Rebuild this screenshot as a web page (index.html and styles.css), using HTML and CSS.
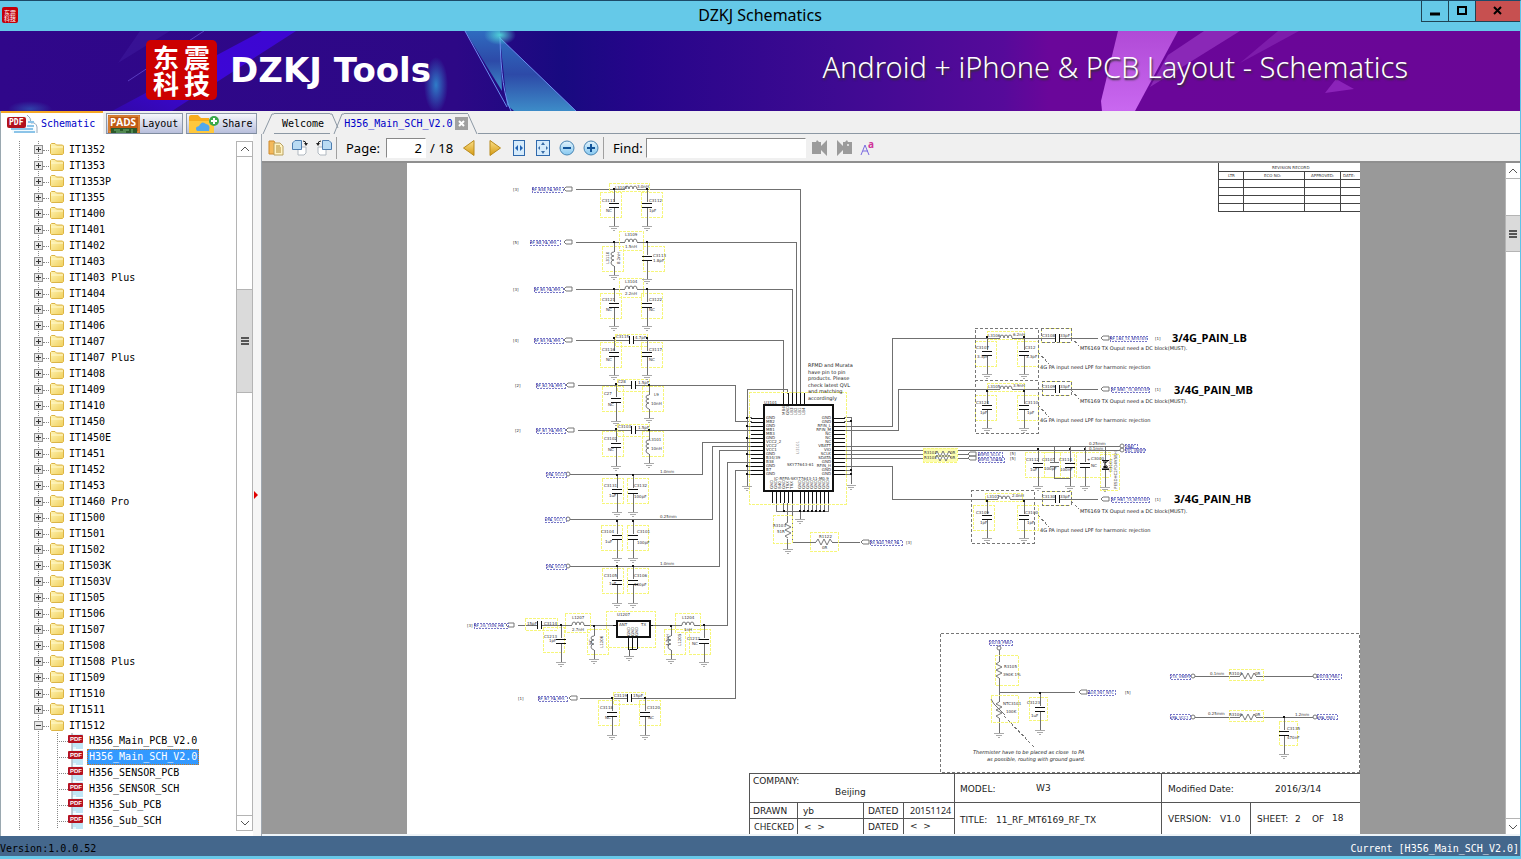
FILE: index.html
```html
<!DOCTYPE html>
<html lang="en">
<head>
    <meta charset="UTF-8">
    <meta name="viewport" content="width=device-width, initial-scale=1.0">
    <title>DZKJ Schematics</title>
    <link rel="stylesheet" href="styles.css">
</head>
<body>
    <!-- shared icons and schematic parts -->
    <svg class="defs" aria-hidden="true">
        <defs>
            <linearGradient id="gold" x1="0" y1="0" x2="1" y2="1">
                <stop offset="0" stop-color="#fff6b8"/><stop offset="1" stop-color="#f0cf5c"/>
            </linearGradient>
            <linearGradient id="amber" x1="0" y1="0" x2="0" y2="1">
                <stop offset="0" stop-color="#fbe08a"/><stop offset="1" stop-color="#d59a12"/>
            </linearGradient>
            <linearGradient id="ball" x1="0" y1="0" x2="0" y2="1">
                <stop offset="0" stop-color="#e2f3fc"/><stop offset="1" stop-color="#86c8f0"/>
            </linearGradient>
            <symbol id="folder" viewBox="0 0 14 12">
                <path d="M0.5 1.5 L1.5 0.5 H5 L6.5 2 H12.5 L13.5 3 V10.5 L12.5 11.5 H1.5 L0.5 10.5 Z" fill="url(#gold)" stroke="#dcb444"/>
                <path d="M1 4 H13" stroke="#fff9d0"/>
            </symbol>
            <symbol id="pdf" viewBox="0 0 16 16">
                <path d="M4 1 H12 L15 4 V16 H4 Z" fill="#e3f6fd"/>
                <path d="M5 11 H15 M5 13 H15 M8 15 H15 M12 2 H15" stroke="#9fd6ee"/>
                <path d="M4 0 V2 M4 9 V16" stroke="#8a98a8"/>
                <rect x="0" y="2" width="15" height="8" rx="1" fill="#b5121f"/>
                <text x="2" y="8" font-size="6" font-weight="bold" fill="#fff" font-family="Liberation Sans, sans-serif">PDF</text>
            </symbol>

            <g id="gnd"><path d="M-5 0 H5 M-3 2 H3 M-1 4 H1" stroke="#aaa"/></g>
            <g id="cap">
                <path d="M0 0 V13 M0 18 V37"/>
                <path d="M-5 14 H5 M-5 18 H5" class="plate"/>
                <circle r="1" class="dot"/>
                <use href="#gnd" y="37"/>
            </g>
            <g id="coil"><path d="M-6 0 H6" stroke="#fff" stroke-width="2"/><path d="M-6 0 q0 -3 2 -3 q2 0 2 3 q0 -3 2 -3 q2 0 2 3 q0 -3 2 -3 q2 0 2 3" class="curve"/></g>
            <g id="coil-v">
                <path d="M0 0 V10 M0 24 V33"/>
                <path d="M0 10 q-3 0 -3 2 q0 2 3 2 q-3 0 -3 2 q0 2 3 2 q-3 0 -3 3 q0 2 3 3" class="curve"/>
                <circle r="1" class="dot"/>
                <use href="#gnd" y="33"/>
            </g>
            <g id="cap-h"><path d="M-2 0 H2" stroke="#fff" stroke-width="3"/><path d="M-2 -4 V4 M2 -4 V4" class="plate"/></g>
            <g id="res"><path d="M-8 0 H8" stroke="#fff" stroke-width="2"/><path d="M-8 0 l2 -3 l3 6 l3 -6 l3 6 l3 -6 l2 3" class="curve"/></g>
            <g id="res-v"><path d="M0 -8 l-3 2 l6 3 l-6 3 l6 3 l-6 3 l3 2" class="curve"/></g>
            <g id="port"><path d="M0 0 l2 -2 h6 v4 h-6 Z" class="curve"/></g>
            <g id="box"><rect width="21" height="25" class="part"/></g>
        </defs>
    </svg>

    <header class="titlebar">
        <svg class="app-icon" viewBox="0 0 16 16" width="16" height="16">
            <rect width="16" height="16" rx="2" fill="#c4000a"/>
            <text x="2" y="8" font-size="6" fill="#fff">东震</text>
            <text x="2" y="14" font-size="6" fill="#fff">科技</text>
        </svg>
        <h1>DZKJ Schematics</h1>
        <div class="window-buttons">
            <button class="min" aria-label="Minimize"><svg width="10" height="10"><path d="M0 8 H10" stroke="#000" stroke-width="3"/></svg></button>
            <button class="max" aria-label="Maximize"><svg width="10" height="10"><path d="M1 1 H9 V8 H1 Z" fill="none" stroke="#000" stroke-width="2"/></svg></button>
            <button class="close" aria-label="Close"><svg width="10" height="10"><path d="M1 1 L8 8 M8 1 L1 8" stroke="#000" stroke-width="2"/></svg></button>
        </div>
    </header>

    <div class="banner">
        <svg class="banner-art" viewBox="0 0 1520 80" preserveAspectRatio="none">
            <defs>
                <linearGradient id="night">
                    <stop offset="0" stop-color="#30078a"/><stop offset="0.3" stop-color="#2d0886"/>
                    <stop offset="0.37" stop-color="#180a80"/><stop offset="0.42" stop-color="#26058a"/>
                    <stop offset="0.55" stop-color="#3e0a92"/><stop offset="0.66" stop-color="#560a9a"/>
                    <stop offset="0.69" stop-color="#6a069a"/><stop offset="1" stop-color="#6a0696"/>
                </linearGradient>
                <linearGradient id="ray" x1="1" y1="0" x2="0" y2="1">
                    <stop offset="0" stop-color="#3d06d0"/><stop offset="0.6" stop-color="#3c06d8"/><stop offset="1" stop-color="#3208a8"/>
                </linearGradient>
                <linearGradient id="glass" x1="0" y1="0" x2="0" y2="1">
                    <stop offset="0" stop-color="#2f6cc0"/><stop offset="0.5" stop-color="#2d4aa8"/><stop offset="1" stop-color="#3d8cc8"/>
                </linearGradient>
                <linearGradient id="pink" x1="0" y1="0" x2="0" y2="1">
                    <stop offset="0" stop-color="#b04ad6"/><stop offset="1" stop-color="#c968f0"/>
                </linearGradient>
                <radialGradient id="glow"><stop offset="0" stop-color="#2f7cc8"/><stop offset="1" stop-color="#2f7cc8" stop-opacity="0"/></radialGradient>
                <radialGradient id="spark"><stop offset="0" stop-color="#4fd0d8"/><stop offset="1" stop-color="#4fd0d8" stop-opacity="0"/></radialGradient>
            </defs>
            <rect width="1520" height="80" fill="url(#night)"/>
            <path d="M262 0 H296 L172 80 H112 Z" fill="url(#ray)"/>
            <path d="M140 0 H170 L118 32 Z" fill="#3f1ca0" opacity="0.5"/>
            <path d="M204 0 L128 50" stroke="#5a3cc0"/>
            <ellipse cx="436" cy="54" rx="12" ry="28" fill="url(#glow)"/>
            <ellipse cx="30" cy="78" rx="22" ry="8" fill="url(#glow)" opacity="0.5"/>
            <path d="M465 0 H500 L502 60 Z" fill="url(#glass)"/>
            <path d="M500 7 L576 80 H514 L507 74 Z" fill="url(#glass)"/>
            <path d="M465 0 L507 76 M499 6 L576 80 M500 6 Q501 60 511 80" fill="none" stroke="#6b8ff0"/>
            <ellipse cx="500" cy="4" rx="16" ry="10" fill="url(#spark)"/>
            <path d="M1118 0 H1178 L1135 80 H1102 L1101 70 Z" fill="url(#pink)"/>
            <path d="M1204 0 H1240 L1150 56 L1168 24 Z" fill="#a040cc" opacity="0.6"/>
            <path d="M1278 0 H1299 L1240 32 Z" fill="#8a2cb8" opacity="0.6"/>
            <path d="M1336 48 L1354 58 L1325 62 Z" fill="#9a30c8" opacity="0.7"/>
        </svg>
        <div class="brand">
            <div class="logo"><span>东</span><span>震</span><span>科</span><span>技</span></div>
            <div class="brand-name">DZKJ Tools</div>
        </div>
        <div class="tagline">Android + iPhone &amp; PCB Layout - Schematics</div>
    </div>

    <main class="workspace">
        <aside class="sidebar">
            <nav class="side-tabs">
                <button class="side-tab active">
                    <svg width="32" height="18" viewBox="0 0 32 18">
                        <path d="M5 1 H22 L30 10 V18 H5 Z" fill="#f2fbff"/>
                        <path d="M20 0 Q24 2 24 8 Q29 7 30 12 V18" fill="#fff" stroke="#9ab"/>
                        <path d="M4 14 H26 M7 17 H28 M21 7 H27 M20 11 H27" stroke="#8cc4e8" stroke-width="2"/>
                        <rect y="2" width="19" height="11" rx="2" fill="#b3121c"/>
                        <text x="2" y="10" font-size="8" font-weight="bold" fill="#fff">PDF</text>
                    </svg>Schematic
                </button>
                <button class="side-tab">
                    <svg width="32" height="18" viewBox="0 0 32 18">
                        <rect width="32" height="18" fill="#c05a14"/>
                        <rect x="1" y="1" width="30" height="16" fill="none" stroke="#e8a050"/>
                        <rect x="3" y="13" width="26" height="5" fill="#2b5a2b"/>
                        <path d="M6 15 H12 M15 15 H21 M8 17 H18 M24 14 V18" stroke="#79b879"/>
                        <text x="2" y="11" font-size="10" font-weight="bold" fill="#fff" font-family="Open Sans, sans-serif">PADS</text>
                    </svg>Layout
                </button>
                <button class="side-tab">
                    <svg width="32" height="18" viewBox="0 0 32 18">
                        <path d="M1 2 Q1 0 3 0 H10 L13 3 H21 V18 H1 Z" fill="#f7ac1c"/>
                        <path d="M1 6 H26 V18 H1 Z" fill="#ffc83c"/>
                        <path d="M9 16 Q6 12 11 11 Q14 5 18 9 Q23 10 21 16 Z" fill="#52a8ee"/>
                        <circle cx="26" cy="6" r="5" fill="#3aa84a"/>
                        <path d="M23 6 H29 M26 3 V9" stroke="#fff" stroke-width="2"/>
                    </svg>Share
                </button>
            </nav>
            <div class="side-body">
                <div class="tree-pane">
                    <ul class="tree">
                        <li><button class="exp" aria-label="Expand"></button><svg class="folder"><use href="#folder"/></svg>IT1352</li>
                        <li><button class="exp" aria-label="Expand"></button><svg class="folder"><use href="#folder"/></svg>IT1353</li>
                        <li><button class="exp" aria-label="Expand"></button><svg class="folder"><use href="#folder"/></svg>IT1353P</li>
                        <li><button class="exp" aria-label="Expand"></button><svg class="folder"><use href="#folder"/></svg>IT1355</li>
                        <li><button class="exp" aria-label="Expand"></button><svg class="folder"><use href="#folder"/></svg>IT1400</li>
                        <li><button class="exp" aria-label="Expand"></button><svg class="folder"><use href="#folder"/></svg>IT1401</li>
                        <li><button class="exp" aria-label="Expand"></button><svg class="folder"><use href="#folder"/></svg>IT1402</li>
                        <li><button class="exp" aria-label="Expand"></button><svg class="folder"><use href="#folder"/></svg>IT1403</li>
                        <li><button class="exp" aria-label="Expand"></button><svg class="folder"><use href="#folder"/></svg>IT1403 Plus</li>
                        <li><button class="exp" aria-label="Expand"></button><svg class="folder"><use href="#folder"/></svg>IT1404</li>
                        <li><button class="exp" aria-label="Expand"></button><svg class="folder"><use href="#folder"/></svg>IT1405</li>
                        <li><button class="exp" aria-label="Expand"></button><svg class="folder"><use href="#folder"/></svg>IT1406</li>
                        <li><button class="exp" aria-label="Expand"></button><svg class="folder"><use href="#folder"/></svg>IT1407</li>
                        <li><button class="exp" aria-label="Expand"></button><svg class="folder"><use href="#folder"/></svg>IT1407 Plus</li>
                        <li><button class="exp" aria-label="Expand"></button><svg class="folder"><use href="#folder"/></svg>IT1408</li>
                        <li><button class="exp" aria-label="Expand"></button><svg class="folder"><use href="#folder"/></svg>IT1409</li>
                        <li><button class="exp" aria-label="Expand"></button><svg class="folder"><use href="#folder"/></svg>IT1410</li>
                        <li><button class="exp" aria-label="Expand"></button><svg class="folder"><use href="#folder"/></svg>IT1450</li>
                        <li><button class="exp" aria-label="Expand"></button><svg class="folder"><use href="#folder"/></svg>IT1450E</li>
                        <li><button class="exp" aria-label="Expand"></button><svg class="folder"><use href="#folder"/></svg>IT1451</li>
                        <li><button class="exp" aria-label="Expand"></button><svg class="folder"><use href="#folder"/></svg>IT1452</li>
                        <li><button class="exp" aria-label="Expand"></button><svg class="folder"><use href="#folder"/></svg>IT1453</li>
                        <li><button class="exp" aria-label="Expand"></button><svg class="folder"><use href="#folder"/></svg>IT1460 Pro</li>
                        <li><button class="exp" aria-label="Expand"></button><svg class="folder"><use href="#folder"/></svg>IT1500</li>
                        <li><button class="exp" aria-label="Expand"></button><svg class="folder"><use href="#folder"/></svg>IT1501</li>
                        <li><button class="exp" aria-label="Expand"></button><svg class="folder"><use href="#folder"/></svg>IT1502</li>
                        <li><button class="exp" aria-label="Expand"></button><svg class="folder"><use href="#folder"/></svg>IT1503K</li>
                        <li><button class="exp" aria-label="Expand"></button><svg class="folder"><use href="#folder"/></svg>IT1503V</li>
                        <li><button class="exp" aria-label="Expand"></button><svg class="folder"><use href="#folder"/></svg>IT1505</li>
                        <li><button class="exp" aria-label="Expand"></button><svg class="folder"><use href="#folder"/></svg>IT1506</li>
                        <li><button class="exp" aria-label="Expand"></button><svg class="folder"><use href="#folder"/></svg>IT1507</li>
                        <li><button class="exp" aria-label="Expand"></button><svg class="folder"><use href="#folder"/></svg>IT1508</li>
                        <li><button class="exp" aria-label="Expand"></button><svg class="folder"><use href="#folder"/></svg>IT1508 Plus</li>
                        <li><button class="exp" aria-label="Expand"></button><svg class="folder"><use href="#folder"/></svg>IT1509</li>
                        <li><button class="exp" aria-label="Expand"></button><svg class="folder"><use href="#folder"/></svg>IT1510</li>
                        <li><button class="exp" aria-label="Expand"></button><svg class="folder"><use href="#folder"/></svg>IT1511</li>
                        <li><button class="exp open" aria-label="Collapse"></button><svg class="folder"><use href="#folder"/></svg>IT1512</li>
                        <li class="file"><svg class="pdf"><use href="#pdf"/></svg><a href="#">H356_Main_PCB_V2.0</a></li>
                        <li class="file"><svg class="pdf"><use href="#pdf"/></svg><a href="#" class="selected">H356_Main_SCH_V2.0</a></li>
                        <li class="file"><svg class="pdf"><use href="#pdf"/></svg><a href="#">H356_SENSOR_PCB</a></li>
                        <li class="file"><svg class="pdf"><use href="#pdf"/></svg><a href="#">H356_SENSOR_SCH</a></li>
                        <li class="file"><svg class="pdf"><use href="#pdf"/></svg><a href="#">H356_Sub_PCB</a></li>
                        <li class="file"><svg class="pdf"><use href="#pdf"/></svg><a href="#">H356_Sub_SCH</a></li>
                        <li class="more"><svg class="folder"><use href="#folder"/></svg></li>
                    </ul>
                    <div class="scrollbar tree-scroll">
                        <button aria-label="Scroll up"><svg width="10" height="6"><path d="M1 5 L5 1 L9 5"/></svg></button>
                        <div class="track"><div class="before"></div><div class="thumb"><i></i><i></i><i></i></div><div class="after"></div></div>
                        <button aria-label="Scroll down"><svg width="10" height="6"><path d="M1 1 L5 5 L9 1"/></svg></button>
                    </div>
                </div>
                <div class="splitter"><svg width="4" height="8"><path d="M0 0 L4 4 L0 8 Z" fill="#e00000"/></svg></div>
            </div>
        </aside>

        <section class="document">
            <nav class="doc-tabs">
                <svg class="edge" width="12" height="21"><path d="M1 21 L10 1 H12"/></svg>
                <button class="doc-tab">Welcome</button>
                <svg class="edge" width="14" height="21"><path d="M0 1 H2 L8 15 M4 21 L12 1 H14"/></svg>
                <button class="doc-tab active">H356_Main_SCH_V2.0</button>
                <button class="doc-close" aria-label="Close tab"><svg width="13" height="13"><rect width="13" height="13" fill="#a0a0a0"/><path d="M4 4 L9 9 M9 4 L4 9" stroke="#fff" stroke-width="2"/></svg></button>
                <svg class="edge" width="10" height="21"><path d="M0 1 L9 21"/></svg>
                <div class="doc-line"></div>
            </nav>
            <div class="toolbar">
                <button aria-label="Contents"><svg width="16" height="16">
                    <path d="M1 1 H6 L7 3 V14 H1 Z" fill="#f3b95c" stroke="#cf8a2c"/>
                    <path d="M6 3 H12 L15 6 V15 H6 Z" fill="#fff3c4" stroke="#b8a060"/>
                    <path d="M8 6 H12 M8 8 H13 M8 10 H13 M8 12 H13" stroke="#b08a30"/>
                </svg></button>
                <button aria-label="Rotate right"><svg width="16" height="16">
                    <path d="M6 7 H14 V13 L12 15 H6 Z" fill="#fff" stroke="#b0b8c0"/>
                    <path d="M0.5 3 L3 0.5 H9.5 V9.5 H0.5 Z" fill="#b9dbf3" stroke="#4f7eb0"/>
                    <path d="M11 1 Q14 1 14 4" fill="none" stroke="#222"/><path d="M12 3 H16 L14 6 Z" fill="#222"/>
                </svg></button>
                <button aria-label="Rotate left"><svg width="16" height="16">
                    <path d="M2 7 H10 V15 H4 L2 13 Z" fill="#fff" stroke="#b0b8c0"/>
                    <path d="M6.5 0.5 H13 L15.5 3 V9.5 H6.5 Z" fill="#b9dbf3" stroke="#4f7eb0"/>
                    <path d="M5 1 Q2 1 2 4" fill="none" stroke="#222"/><path d="M0 3 H4 L2 6 Z" fill="#222"/>
                </svg></button>
                <span class="sep"></span>
                <label for="page">Page:</label>
                <input id="page" class="page-input" type="text" value="2">
                <span class="page-total">/ 18</span>
                <button aria-label="Previous page"><svg width="16" height="16"><path d="M13 0.5 V15.5 L2.5 8 Z" fill="url(#amber)" stroke="#b98a1c"/></svg></button>
                <button class="next" aria-label="Next page"><svg width="16" height="16"><path d="M3 0.5 V15.5 L13.5 8 Z" fill="url(#amber)" stroke="#b98a1c"/></svg></button>
                <button aria-label="Fit width"><svg width="16" height="16">
                    <rect x="2.5" y="0.5" width="11" height="15" fill="#d6ebfb" stroke="#2f69ac"/><path d="M7 5 V11 L4 8 Z M9 5 V11 L12 8 Z" fill="#1f62b4"/>
                </svg></button>
                <button aria-label="Fit page"><svg width="16" height="16">
                    <rect x="1.5" y="0.5" width="13" height="15" fill="#d6ebfb" stroke="#2f69ac"/><path d="M8 2 L10 5 H6 Z M8 14 L10 11 H6 Z M3 8 L5 6 V10 Z M13 8 L11 6 V10 Z" fill="#3b6ea8"/>
                </svg></button>
                <button aria-label="Zoom out"><svg width="16" height="16"><circle cx="8" cy="8" r="7" fill="url(#ball)" stroke="#4a86b4"/><path d="M4 8 H12" stroke="#12559a" stroke-width="2"/></svg></button>
                <button aria-label="Zoom in"><svg width="16" height="16"><circle cx="8" cy="8" r="7" fill="url(#ball)" stroke="#4a86b4"/><path d="M4 8 H12 M8 4 V12" stroke="#12559a" stroke-width="2"/></svg></button>
                <span class="sep"></span>
                <label for="find">Find:</label>
                <input id="find" class="find-input" type="text">
                <button aria-label="Find previous"><svg width="16" height="16"><path d="M0 2 H4 L5 0 L7 2 H9 V6 L15 0 V16 L9 10 V14 H0 Z" fill="#9b9b9b"/></svg></button>
                <button aria-label="Find next"><svg width="16" height="16"><path d="M16 2 H12 L11 0 L9 2 H7 V6 L1 0 V16 L7 10 V14 H16 Z" fill="#9b9b9b"/><circle cx="12" cy="5" r="1" fill="#eee"/></svg></button>
                <button aria-label="Match case"><svg class="case" width="16" height="16"><path d="M1 15 L5 5 L9 15 M3 11 H8" fill="none" stroke="#7a6ae0"/><text x="8" y="8" font-size="10" font-weight="bold" fill="#d0359a">a</text></svg></button>
            </div>

            <div class="viewer">
                <div class="canvas">
                    <svg class="sheet" viewBox="407 163 953 671" preserveAspectRatio="xMidYMin meet">
                        <!-- revision record -->
                        <path d="M1218 163 V211 H1360 M1218 171 H1360 M1218 179 H1360 M1218 187 H1360 M1218 195 H1360 M1218 203 H1360 M1243 171 V211 M1304 171 V211 M1340 171 V211" stroke="#444"/>
                        <g class="tiny">
                            <text x="1272" y="169">REVISION RECORD</text><text x="1228" y="177">LTR</text><text x="1264" y="177">ECO NO:</text>
                            <text x="1311" y="177">APPROVED:</text><text x="1343" y="177">DATE:</text>
                        </g>

                        <!-- wires -->
                        <g class="wire">
                            <path d="M576 189 H800 V394 M576 242 H796 V394 M576 289 H792 V394 M576 340 H783 V394"/>
                            <path d="M578 385 H735 V421 H752 M578 430 H752"/>
                            <path d="M570 474 H702 V442 H752 M570 519 H712 V446 H752 M570 566 H719 V450 H752"/>
                            <path d="M518 625 H616 M650 625 H727 V462 H752 M580 698 H735 V470 H752"/>
                            <path d="M787 394 V389 H747 V486 M747 417 H752 M747 426 H752 M747 438 H752 M747 454 H752 M747 466 H752 M747 474 H752"/>
                            <path d="M844 417 H851 V484 M844 421 H851 M844 470 H851 M844 474 H851"/>
                            <path d="M844 426 H892 V338 H1098 M844 430 H898 V389 H1098 M844 466 H892 V499 H1098"/>
                            <path d="M844 446 H1120 M844 450 H1120 M844 454 H968 M844 458 H968"/>
                            <path d="M776 503 V511 H828 V503 M783 503 V511 M800 503 V519 M804 503 V511 M808 503 V511 M812 503 V511 M816 503 V511 M820 503 V511 M824 503 V511"/>
                            <path d="M787 503 V522 M787 539 V549 M792 503 V542 H860"/>
                            <path d="M999 650 V662 M999 678 V702 M999 718 V733 M999 692 H1075 M1195 676 H1313 M1195 717 H1313"/>
                        </g>
                        <g><use href="#gnd" x="747" y="486"/><use href="#gnd" x="851" y="485"/><use href="#gnd" x="800" y="519"/><use href="#gnd" x="788" y="549"/><use href="#gnd" x="999" y="733"/></g>

                        <!-- part outlines -->
                        <g>
                            <rect x="609" y="183" width="40" height="8" class="part"/><use href="#box" x="600" y="192"/><use href="#box" x="641" y="192"/>
                            <rect x="619" y="231" width="24" height="19" class="part"/><use href="#box" x="602" y="246"/><use href="#box" x="643" y="246"/>
                            <rect x="619" y="278" width="24" height="19" class="part"/><use href="#box" x="600" y="293"/><use href="#box" x="641" y="293"/>
                            <rect x="615" y="334" width="32" height="12" class="part"/><use href="#box" x="600" y="342"/><use href="#box" x="641" y="342"/>
                            <rect x="617" y="379" width="32" height="12" class="part"/><use href="#box" x="602" y="386"/><use href="#box" x="642" y="386"/>
                            <rect x="617" y="424" width="32" height="12" class="part"/><use href="#box" x="602" y="431"/><use href="#box" x="642" y="431"/>
                            <use href="#box" x="602" y="478"/><use href="#box" x="627" y="478"/><use href="#box" x="601" y="525"/><use href="#box" x="627" y="525"/><use href="#box" x="602" y="568"/><use href="#box" x="627" y="568"/>
                            <rect x="525" y="618" width="32" height="12" class="part"/><rect x="565" y="613" width="25" height="19" class="part"/><rect x="675" y="613" width="25" height="19" class="part"/><rect x="606" y="611" width="49" height="36" class="part"/>
                            <use href="#box" x="543" y="627"/><use href="#box" x="587" y="629"/><use href="#box" x="664" y="629"/><use href="#box" x="689" y="629"/>
                            <rect x="613" y="692" width="32" height="12" class="part"/><use href="#box" x="598" y="700"/><use href="#box" x="639" y="700"/>
                            <rect x="749" y="392" width="97" height="112" class="part"/><rect x="773" y="515" width="19" height="28" class="part"/><rect x="810" y="532" width="28" height="19" class="part"/>
                            <rect x="923" y="448" width="34" height="14" class="part filled"/>
                            <rect x="987" y="331" width="37" height="8" class="part"/><use href="#box" x="975" y="341"/><use href="#box" x="1017" y="341"/>
                            <rect x="987" y="383" width="37" height="8" class="part"/><use href="#box" x="975" y="395"/><use href="#box" x="1017" y="395"/>
                            <rect x="985" y="493" width="37" height="8" class="part"/><use href="#box" x="973" y="505"/><use href="#box" x="1017" y="505"/>
                            <rect x="1041" y="328" width="30" height="14" class="part"/><rect x="1042" y="381" width="29" height="14" class="part"/><rect x="1042" y="491" width="29" height="14" class="part"/>
                            <rect x="1025" y="452" width="35" height="25" class="part"/><rect x="1044" y="452" width="30" height="25" class="part"/><rect x="1076" y="452" width="34" height="25" class="part"/><rect x="1100" y="454" width="19" height="36" class="part"/>
                            <rect x="995" y="655" width="23" height="30" class="part"/><rect x="991" y="695" width="27" height="27" class="part"/><rect x="1029" y="697" width="18" height="23" class="part"/>
                            <rect x="1229" y="669" width="34" height="11" class="part"/><rect x="1229" y="710" width="34" height="11" class="part"/><rect x="1279" y="721" width="18" height="24" class="part"/>
                        </g>

                        <!-- capacitors, coils and resistors -->
                        <g class="wire">
                            <use href="#cap" x="614" y="189"/><use href="#cap" x="647" y="189"/><use href="#coil" x="631" y="189"/>
                            <use href="#coil-v" x="614" y="242"/><use href="#cap" x="647" y="242"/><use href="#coil" x="631" y="242"/>
                            <use href="#cap" x="614" y="289"/><use href="#cap" x="647" y="289"/><use href="#coil" x="631" y="289"/>
                            <use href="#cap" x="614" y="338"/><use href="#cap" x="647" y="338"/><use href="#cap-h" x="631" y="340"/>
                            <use href="#cap" x="616" y="384"/><use href="#coil-v" x="649" y="385"/><use href="#cap-h" x="633" y="385"/>
                            <use href="#cap" x="616" y="429"/><use href="#coil-v" x="649" y="430"/><use href="#cap-h" x="633" y="430"/>
                            <use href="#cap" x="617" y="475"/><use href="#cap" x="633" y="475"/>
                            <use href="#cap" x="617" y="521"/><use href="#cap" x="633" y="521"/>
                            <use href="#cap" x="617" y="566"/><use href="#cap" x="633" y="566"/>
                            <use href="#cap-h" x="539" y="625"/><use href="#cap" x="561" y="625"/><use href="#coil" x="578" y="625"/><use href="#coil-v" x="594" y="626"/>
                            <use href="#coil-v" x="671" y="626"/><use href="#coil" x="688" y="625"/><use href="#cap" x="704" y="625"/>
                            <use href="#cap" x="612" y="698"/><use href="#cap-h" x="629" y="698"/><use href="#cap" x="645" y="698"/>
                            <use href="#cap" x="987" y="337"/><use href="#coil" x="1006" y="338"/><use href="#cap" x="1024" y="337"/><use href="#cap-h" x="1057" y="338"/>
                            <use href="#cap" x="987" y="391"/><use href="#coil" x="1006" y="389"/><use href="#cap" x="1024" y="391"/><use href="#cap-h" x="1057" y="389"/>
                            <use href="#cap" x="987" y="501"/><use href="#coil" x="1004" y="499"/><use href="#cap" x="1024" y="501"/><use href="#cap-h" x="1057" y="499"/>
                            <use href="#cap" x="1038" y="449"/><path d="M1054 446 V462 M1054 466 V478 H1070 M1050 462 H1059 M1050 466 H1059"/><use href="#cap" x="1070" y="449"/><use href="#cap" x="1085" y="449"/>
                            <path d="M1105 446 V487 M1070 446 V450 M1085 446 V450"/><path d="M1103 461 H1108 L1105 464 L1108 468 H1103 L1105 464 Z" class="solid"/><path d="M1102 460 H1109 M1102 469 H1109" class="plate"/><use href="#gnd" x="1105" y="487"/>
                            <use href="#cap" x="1040" y="693"/><use href="#res-v" x="999" y="670"/><use href="#res-v" x="999" y="710"/><path d="M991 699 L994 704 L1005 715" class="curve"/>
                            <use href="#res" x="1248" y="676"/><use href="#res" x="1248" y="717"/><use href="#cap" x="1284" y="717"/>
                            <use href="#res-v" x="788" y="530"/><use href="#res" x="824" y="542"/><use href="#res" x="943" y="454"/><use href="#res" x="943" y="458"/>
                        </g>

                        <!-- ports -->
                        <g>
                            <use href="#port" x="564" y="189"/><use href="#port" x="564" y="242"/><use href="#port" x="564" y="289"/><use href="#port" x="564" y="340"/><use href="#port" x="566" y="385"/><use href="#port" x="566" y="430"/>
                            <use href="#port" x="506" y="625"/><use href="#port" x="569" y="698"/><use href="#port" x="861" y="542"/><use href="#port" x="968" y="454"/><use href="#port" x="968" y="458"/>
                            <use href="#port" x="1101" y="338"/><use href="#port" x="1101" y="389"/><use href="#port" x="1101" y="499"/><use href="#port" x="1079" y="692"/>
                            <circle cx="568" cy="474" r="2" class="curve"/><circle cx="568" cy="519" r="2" class="curve"/><circle cx="568" cy="566" r="2" class="curve"/>
                            <circle cx="1122" cy="446" r="2" class="curve"/><circle cx="1122" cy="450" r="2" class="curve"/><circle cx="999" cy="648" r="2" class="curve"/>
                            <circle cx="1193" cy="676" r="2" class="curve"/><circle cx="1193" cy="717" r="2" class="curve"/><circle cx="1315" cy="676" r="2" class="curve"/><circle cx="1315" cy="717" r="2" class="curve"/>
                        </g>
                        <g class="net-box">
                            <rect x="532" y="187" width="31" height="5"/><rect x="530" y="240" width="30" height="5"/><rect x="534" y="287" width="29" height="5"/><rect x="534" y="338" width="29" height="5"/><rect x="536" y="383" width="29" height="5"/><rect x="536" y="428" width="29" height="5"/>
                            <rect x="546" y="472" width="20" height="5"/><rect x="545" y="517" width="21" height="5"/><rect x="546" y="564" width="20" height="5"/><rect x="474" y="623" width="34" height="5"/><rect x="538" y="696" width="29" height="5"/>
                            <rect x="870" y="540" width="32" height="5"/><rect x="978" y="452" width="24" height="5"/><rect x="978" y="457" width="26" height="5"/><rect x="1110" y="336" width="37" height="5"/><rect x="1111" y="387" width="38" height="5"/><rect x="1111" y="497" width="38" height="5"/>
                            <rect x="1125" y="444" width="12" height="4"/><rect x="1125" y="448" width="20" height="4"/><rect x="989" y="640" width="23" height="5"/><rect x="1088" y="690" width="27" height="5"/>
                            <rect x="1170" y="674" width="20" height="5"/><rect x="1170" y="714" width="20" height="5"/><rect x="1317" y="674" width="24" height="5"/><rect x="1317" y="714" width="20" height="5"/>
                        </g>
                        <g class="net">
                            <text x="532" y="191">RF_B38_PA_RFX</text><text x="530" y="244">RF_B8_PA_RFX</text><text x="534" y="291">RF_B5_PA_RFX</text><text x="534" y="342">RF_B3_PA_RFX</text><text x="536" y="387">RF_B2_PA_RFX</text><text x="536" y="432">RF_B1_PA_RFX</text>
                            <text x="546" y="476">VPA_VCC2</text><text x="545" y="521">VPA_VCC1</text><text x="546" y="568">VPA_VCC2</text><text x="474" y="627">RF_2G_TXIN_HB</text><text x="538" y="700">RF_B7_PA_RFX</text>
                            <text x="870" y="544">RX_B40_TRX_PA</text><text x="978" y="456">MIPI0_SCLK</text><text x="978" y="461">MIPI0_SDATA</text>
                            <text x="1110" y="340">RF_LB3_TX_MT6169</text><text x="1111" y="391">RF_MB1_TX_MT6169</text><text x="1111" y="501">RF_HB1_TX_MT6169</text>
                            <text x="1125" y="448">VBAT</text><text x="1125" y="452">VIO_VMIPI</text><text x="989" y="644">VIO18_PMU</text><text x="1088" y="694">AUX_IN1_NTC</text>
                            <text x="1170" y="678">VTX_VMIPI</text><text x="1170" y="719">VPA_VCC1</text><text x="1317" y="678">VIO18_PMU</text><text x="1317" y="719">VPA_PMU</text>
                        </g>

                        <g class="tiny">
                            <text x="513" y="191">[3]</text><text x="513" y="244">[5]</text><text x="513" y="291">[3]</text><text x="513" y="342">[4]</text><text x="515" y="387">[2]</text><text x="515" y="432">[2]</text><text x="467" y="627">[3]</text><text x="518" y="700">[1]</text>
                            <text x="906" y="544">[3]</text><text x="1010" y="455">[5]</text><text x="1010" y="460">[5]</text><text x="1155" y="340">[1]</text><text x="1155" y="391">[1]</text><text x="1155" y="501">[1]</text><text x="1125" y="694">[5]</text>
                            <text x="615" y="189">L3103</text><text x="637" y="188">3.0nH</text><text x="602" y="202">C3111</text><text x="606" y="212">NC</text><text x="649" y="202">C3112</text><text x="649" y="212">1pF</text>
                            <text x="625" y="236">L3109</text><text x="625" y="248">1.5nH</text><text x="653" y="257">C3113</text><text x="653" y="262">1.8pF</text><text transform="translate(609 264) rotate(-90)">L3110</text><text transform="translate(620 264) rotate(-90)">8.2nH</text>
                            <text x="625" y="283">L3104</text><text x="625" y="295">2.2nH</text><text x="602" y="301">C3121</text><text x="606" y="311">NC</text><text x="649" y="301">C3122</text><text x="649" y="311">NC</text>
                            <text x="616" y="338">C3115</text><text x="635" y="339">4.7pF</text><text x="602" y="351">C3116</text><text x="606" y="361">NC</text><text x="649" y="351">C3117</text><text x="649" y="361">NC</text>
                            <text x="618" y="383">C28</text><text x="638" y="384">1.5pF</text><text x="604" y="395">C27</text><text x="608" y="406">NC</text><text x="654" y="396">L9</text><text x="651" y="405">10nH</text>
                            <text x="618" y="428">C3103</text><text x="638" y="429">1.5pF</text><text x="604" y="440">C3102</text><text x="608" y="451">NC</text><text x="649" y="441">L3101</text><text x="651" y="450">10nH</text>
                            <text x="660" y="473">1.0mm</text><text x="660" y="518">0.25mm</text><text x="660" y="565">1.0mm</text>
                            <text x="604" y="487">C3131</text><text x="609" y="497">1uF</text><text x="634" y="487">C3132</text><text x="634" y="498">100pF</text>
                            <text x="601" y="533">C3104</text><text x="605" y="543">1uF</text><text x="637" y="533">C3101</text><text x="637" y="544">100pF</text>
                            <text x="604" y="577">C3105</text><text x="609" y="585">1uF</text><text x="634" y="577">C3106</text><text x="634" y="586">100pF</text>
                            <text x="527" y="625">15pF</text><text x="544" y="625">C3114</text><text x="572" y="619">L1207</text><text x="572" y="631">2.7nH</text><text x="544" y="638">C1213</text><text x="549" y="642">1pF</text>
                            <text transform="translate(592 645) rotate(-90)">NC</text><text transform="translate(603 648) rotate(-90)">L1206</text><text transform="translate(669 646) rotate(-90)">4.7nH</text><text transform="translate(681 646) rotate(-90)">L1205</text>
                            <text x="682" y="619">L1204</text><text x="684" y="631">1nH</text><text x="687" y="640">C1212</text><text x="692" y="645">NC</text><text x="617" y="616">U1207</text>
                            <text x="614" y="697">C3119</text><text x="633" y="697">15pF</text><text x="600" y="709">C3118</text><text x="605" y="719">NC</text><text x="647" y="709">C3120</text><text x="648" y="719">NC</text>
                            <text x="988" y="337">L3106</text><text x="1013" y="336">6.2nH</text><text x="976" y="349">C3107</text><text x="977" y="358">3.3pF</text><text x="1025" y="349">C312</text><text x="1026" y="358">3.3pF</text><text x="1042" y="337">C3108</text><text x="1060" y="337">33pF</text>
                            <text x="988" y="388">L3105</text><text x="1013" y="387">3.9nH</text><text x="976" y="404">C3124</text><text x="980" y="414">1pF</text><text x="1025" y="404">C3110</text><text x="1027" y="414">1pF</text><text x="1042" y="388">C3109</text><text x="1060" y="388">33pF</text>
                            <text x="987" y="498">L3107</text><text x="1012" y="497">2.0nH</text><text x="976" y="514">C3109</text><text x="980" y="524">1pF</text><text x="1025" y="514">C3100</text><text x="1027" y="524">1pF</text><text x="1042" y="498">C3130</text><text x="1060" y="498">33pF</text>
                            <text x="1089" y="445">0.25mm</text><text x="1089" y="450">0.1mm</text><text x="1026" y="461">C3112</text><text x="1030" y="471">1uF</text><text x="1042" y="461">C3107</text><text x="1044" y="470">100pF</text><text x="1059" y="461">C3114</text><text x="1060" y="471">100nF</text><text x="1091" y="460">C3000</text><text x="1091" y="467">NC</text><text x="1087" y="461">+</text>
                            <text transform="translate(1112 472) rotate(-90)">D3101</text><text transform="translate(1117 489) rotate(-90)">PESDHC2FD4V5BH</text>
                            <text x="924" y="454">R3101</text><text x="924" y="459">R3102</text><text x="950" y="454">0R</text><text x="950" y="459">0R</text><text x="773" y="527">R3103</text><text x="777" y="533">51R</text><text x="819" y="538">R1122</text><text x="822" y="549">0R</text>
                            <text x="1004" y="668">R3105</text><text x="1003" y="676">390K 1%</text><text x="1003" y="705">NTC3101</text><text x="1006" y="713">100K</text><text x="1027" y="704">C3123</text><text x="1031" y="717">1uF</text>
                            <text x="1210" y="675">0.1mm</text><text x="1229" y="675">R3104</text><text x="1255" y="675">0R</text><text x="1208" y="715">0.25mm</text><text x="1229" y="716">R3106</text><text x="1255" y="716">0R</text><text x="1295" y="716">1.2mm</text><text x="1287" y="730">C3135</text><text x="1287" y="739">470nF</text>
                            <text x="764" y="404">U3101</text><text x="787" y="466">SKY77643-61</text><text transform="translate(799 454) rotate(-90)" fill="#999">U3101</text>
                            <text x="774" y="480">IC-RFPA-SKY77643-11-M0.9</text>
                        </g>

                        <!-- main amplifier -->
                        <g class="chip">
                            <rect x="764" y="405" width="69" height="86"/>
                            <path class="pins" d="M751 418 H764 M751 422 H764 M751 426 H764 M751 430 H764 M751 434 H764 M751 438 H764 M751 442 H764 M751 446 H764 M751 450 H764 M751 454 H764 M751 458 H764 M751 462 H764 M751 466 H764 M751 470 H764 M751 474 H764"/>
                            <path class="pins" d="M833 418 H845 M833 422 H845 M833 426 H845 M833 430 H845 M833 434 H845 M833 438 H845 M833 442 H845 M833 446 H845 M833 450 H845 M833 454 H845 M833 458 H845 M833 462 H845 M833 466 H845 M833 470 H845 M833 474 H845"/>
                            <path class="pins" d="M783 393 V405 M788 393 V405 M792 393 V405 M796 393 V405 M800 393 V405 M804 393 V405"/>
                            <path class="pins" d="M772 491 V503 M776 491 V503 M780 491 V503 M784 491 V503 M788 491 V503 M792 491 V503 M800 491 V503 M804 491 V503 M808 491 V503 M812 491 V503 M816 491 V503 M820 491 V503 M824 491 V503 M828 491 V503"/>
                            <rect x="617" y="621" width="33" height="16"/>
                            <path class="pins" d="M613 625 H617 M650 625 H653 M628 637 V649 M632 637 V649 M637 637 V649 M628 649 H637"/>
                        </g>
                        <use href="#gnd" x="629" y="656"/><path d="M629 649 V656" stroke="#666"/>
                        <g class="dot"><circle cx="747" cy="418" r="1"/><circle cx="747" cy="426" r="1"/><circle cx="747" cy="438" r="1"/><circle cx="747" cy="454" r="1"/><circle cx="747" cy="466" r="1"/><circle cx="747" cy="474" r="1"/><circle cx="851" cy="421" r="1"/><circle cx="851" cy="470" r="1"/><circle cx="851" cy="474" r="1"/>
                            <circle cx="784" cy="511" r="1"/><circle cx="800" cy="511" r="1"/><circle cx="804" cy="511" r="1"/><circle cx="808" cy="511" r="1"/><circle cx="812" cy="511" r="1"/><circle cx="816" cy="511" r="1"/><circle cx="820" cy="511" r="1"/><circle cx="824" cy="511" r="1"/></g>
                        <g class="tiny">
                            <text x="766" y="419">GND</text><text x="766" y="423">MB2</text><text x="766" y="427">GND</text><text x="766" y="431">MB1</text><text x="766" y="435">MB3</text><text x="766" y="439">GND</text><text x="766" y="443">VCC2_2</text><text x="766" y="447">VCC2</text><text x="766" y="451">VCC1</text><text x="766" y="455">GND</text><text x="766" y="459">B34/39</text><text x="766" y="463">B38</text><text x="766" y="467">GND</text><text x="766" y="471">B7</text><text x="766" y="475">GND</text>
                            <g text-anchor="end"><text x="831" y="419">GND</text><text x="831" y="423">GND</text><text x="831" y="427">RFIN_L</text><text x="831" y="431">RFIN_M</text><text x="831" y="435">NC</text><text x="831" y="439">NC</text><text x="831" y="443">NC</text><text x="831" y="447">VBATT</text><text x="831" y="451">VIO</text><text x="831" y="455">SCLK</text><text x="831" y="459">SDATA</text><text x="831" y="463">GND</text><text x="831" y="467">RFIN_H</text><text x="831" y="471">GND</text><text x="831" y="475">GND</text></g>
                            <text transform="translate(785 415) rotate(-90)">MB4</text><text transform="translate(789 415) rotate(-90)">GND</text><text transform="translate(793 415) rotate(-90)">LB3</text><text transform="translate(797 415) rotate(-90)">LB2</text><text transform="translate(801 415) rotate(-90)">LB1</text><text transform="translate(805 415) rotate(-90)">LB4</text>
                            <text transform="translate(773 489) rotate(-90)">GND</text><text transform="translate(777 489) rotate(-90)">GND</text><text transform="translate(781 489) rotate(-90)">B40</text><text transform="translate(785 489) rotate(-90)">GND</text><text transform="translate(789 489) rotate(-90)">TRX</text><text transform="translate(793 489) rotate(-90)">TRX</text>
                            <text transform="translate(801 489) rotate(-90)">GND</text><text transform="translate(805 489) rotate(-90)">GND</text><text transform="translate(809 489) rotate(-90)">GND</text><text transform="translate(813 489) rotate(-90)">GND</text><text transform="translate(817 489) rotate(-90)">GND</text><text transform="translate(821 489) rotate(-90)">GND</text><text transform="translate(825 489) rotate(-90)">GND</text><text transform="translate(829 489) rotate(-90)">GND</text>
                            <text x="619" y="626">ANT</text><text x="641" y="626">TX</text><text transform="translate(630 636) rotate(-90)">GND</text><text transform="translate(634 636) rotate(-90)">GND</text><text transform="translate(638 636) rotate(-90)">GND</text>
                        </g>

                        <!-- notes -->
                        <g class="dash">
                            <rect x="975" y="328" width="63" height="52"/><rect x="975" y="380" width="63" height="53"/><rect x="971" y="490" width="63" height="53"/>
                            <rect x="1041" y="328" width="30" height="14"/><rect x="1042" y="381" width="29" height="14"/><rect x="1042" y="491" width="29" height="14"/>
                            <path d="M1359 773 V633 H940 V772 H1359"/>
                            <path d="M1071 337 L1079 346 M1071 390 L1079 399 M1071 501 L1079 509 M1038 352 L1049 364 M1038 405 L1049 417 M1038 515 L1049 527 M1004 716 L1035 748"/>
                        </g>
                        <g class="note">
                            <text x="808" y="367">RFMD and Murata</text><text x="808" y="374">have pin to pin</text><text x="808" y="380">products. Please</text><text x="808" y="387">check latest QVL</text><text x="808" y="393">and matching</text><text x="808" y="400">accordingly</text>
                            <text x="1080" y="350">MT6169 TX Ouput need a DC block(MUST).</text><text x="1080" y="403">MT6169 TX Ouput need a DC block(MUST).</text><text x="1080" y="513">MT6169 TX Ouput need a DC block(MUST).</text>
                            <text x="1040" y="369">4G PA input need LPF for harmonic rejection</text><text x="1040" y="422">4G PA input need LPF for harmonic rejection</text><text x="1040" y="532">4G PA input need LPF for harmonic rejection</text>
                        </g>
                        <g class="note italic"><text x="973" y="754">Thermister have to be placed as close&#160; to PA</text><text x="987" y="761">as possible, routing with ground guard.</text></g>
                        <g class="heading"><text x="1172" y="342">3/4G_PAIN_LB</text><text x="1174" y="394">3/4G_PAIN_MB</text><text x="1174" y="503">3/4G_PAIN_HB</text></g>

                        <!-- title block -->
                        <path d="M749 834 V773 H1360 M749 802 H1360 M749 818 H954 M797 802 V834 M863 802 V834 M903 802 V834 M954 773 V834 M1161 773 V834 M1250 802 V834" class="frame"/>
                        <g class="block">
                            <text x="753" y="784">COMPANY:</text><text x="835" y="795">Beijing</text><text x="753" y="814">DRAWN</text><text x="803" y="814">yb</text><text x="868" y="814">DATED</text><text x="910" y="814" class="narrow">20151124</text>
                            <text x="754" y="830" class="narrow">CHECKED</text><text x="804" y="830">&lt;&#160; &gt;</text><text x="868" y="830">DATED</text><text x="910" y="829">&lt;&#160; &gt;</text>
                            <text x="960" y="792">MODEL:</text><text x="1036" y="791">W3</text><text x="960" y="823">TITLE:</text><text x="996" y="823">11_RF_MT6169_RF_TX</text>
                            <text x="1168" y="792">Modified Date:</text><text x="1275" y="792">2016/3/14</text><text x="1168" y="822">VERSION:</text><text x="1220" y="822">V1.0</text>
                            <text x="1257" y="822">SHEET:</text><text x="1295" y="822">2</text><text x="1312" y="822">OF</text><text x="1332" y="821">18</text>
                        </g>
                    </svg>
                </div>
                <div class="scrollbar doc-scroll">
                    <button aria-label="Scroll up"><svg width="10" height="6"><path d="M1 5 L5 1 L9 5"/></svg></button>
                    <div class="track"><div class="before"></div><div class="thumb"><i></i><i></i><i></i></div><div class="after"></div></div>
                    <button aria-label="Scroll down"><svg width="10" height="6"><path d="M1 1 L5 5 L9 1"/></svg></button>
                </div>
            </div>
        </section>
    </main>

    <footer class="status">
        <span>Version:1.0.0.52</span>
        <span class="current">Current [H356_Main_SCH_V2.0]</span>
    </footer>
</body>
</html>
```
FILE: styles.css
```css
* {
    box-sizing: border-box;
}
html, body {
    height: 100%;
    margin: 0;
    overflow: hidden;
}
body {
    display: flex;
    flex-direction: column;
    border-top: 1px solid #1c4a68;
    border-right: 1px solid #5cc4ea;
    border-bottom: 3px solid #68c8e8;
    background-color: #f0f0f0;
    font-family: "DejaVu Sans Mono", "Noto Sans CJK SC", monospace;
    font-size: 10px;
    color: #000;
}
button {
    padding: 0;
    border: none;
    background: none;
    font: inherit;
    color: inherit;
}
svg {
    display: block;
    flex: none;
}
.defs {
    position: absolute;
    width: 0;
    height: 0;
}

/* title bar */
.titlebar {
    display: grid;
    grid-template-columns: 1fr auto 1fr;
    height: 30px;
    background-color: #65c9e8;
}
.titlebar h1 {
    margin: 0;
    font: 16px/28px "Noto Sans", sans-serif;
}
.app-icon {
    margin: 6px 2px;
    font-family: "Noto Sans CJK SC", sans-serif;
}
.window-buttons {
    display: flex;
    justify-self: end;
    height: 21px;
    border: 1px solid #1f4253;
    border-width: 0 0 1px 1px;
}
.window-buttons button {
    display: flex;
    align-items: center;
    justify-content: center;
    width: 27px;
    border-right: 1px solid #1f4253;
}
.window-buttons .close {
    width: 44px;
    border: none;
    background-color: #c75050;
}

/* banner */
.banner {
    position: relative;
    display: flex;
    align-items: center;
    justify-content: space-between;
    height: 80px;
    padding: 0 112px 2px 146px;
    color: #fff;
}
.banner-art {
    position: absolute;
    top: 0;
    left: 0;
    width: 100%;
    height: 100%;
}
.brand {
    position: relative;
    display: flex;
    align-items: center;
    gap: 13px;
}
.logo {
    display: grid;
    grid-template-columns: 28px 28px;
    gap: 0 3px;
    padding: 4px 6px;
    border-radius: 5px;
    background-color: #cc0000;
    font: bold 26px/26px "Noto Sans CJK SC", sans-serif;
    text-align: center;
}
.brand-name {
    font: bold 34px/40px "DejaVu Sans", sans-serif;
}
.tagline {
    position: relative;
    padding-bottom: 6px;
    font: 29px/40px "Noto Sans", sans-serif;
    font-weight: 300;
    text-shadow: 1px 2px 2px #333;
}

/* left side */
.workspace {
    display: flex;
    flex: 1;
    min-height: 0;
}
.sidebar {
    display: flex;
    flex-direction: column;
    width: 262px;
    border-left: 1px solid #9aa8b0;
}
.side-tabs {
    display: flex;
    align-items: flex-end;
    gap: 3px;
    height: 23px;
}
.side-tab {
    display: flex;
    align-items: center;
    gap: 2px;
    height: 21px;
    padding: 0 4px 0 1px;
    border: 1px solid #8c98a8;
    border-bottom-color: #7f8ca0;
    background: linear-gradient(#f6f7fb, #b8bfdc);
}
.side-tab.active {
    height: 23px;
    padding: 0 8px 0 6px;
    border: none;
    border-top: 2px solid #f5a623;
    background: #fff;
    color: #0000c8;
}
.side-body {
    display: flex;
    flex: 1;
    min-height: 0;
}
.tree-pane {
    display: flex;
    flex: 1;
    min-width: 0;
    padding: 7px 0 5px;
    background-color: #fff;
}
.tree {
    flex: 1;
    margin: 0;
    padding: 0;
    overflow: hidden;
    list-style: none;
    background-image: repeating-linear-gradient(#888 0 1px, transparent 1px 2px), repeating-linear-gradient(#888 0 1px, transparent 1px 2px);
    background-size: 1px 100%;
    background-position: 18px 0, 37px 0;
    background-repeat: no-repeat;
}
.tree li {
    display: flex;
    align-items: center;
    height: 16px;
    padding-left: 33px;
}
.exp {
    width: 9px;
    height: 9px;
    border: 1px solid #919191;
    background: linear-gradient(#333, #333) center / 5px 1px no-repeat, linear-gradient(#333, #333) center / 1px 5px no-repeat, #e8e8e8;
}
.exp.open {
    background: linear-gradient(#333, #333) center / 5px 1px no-repeat, #e8e8e8;
}
.exp::after {
    content: "";
    display: block;
    width: 6px;
    margin: 3px 0 0 8px;
    border-top: 1px dotted #888;
}
.folder {
    width: 14px;
    height: 12px;
    margin: 0 5px 0 7px;
}
.tree .file {
    padding-left: 56px;
    background: repeating-linear-gradient(#888 0 1px, transparent 1px 2px) 56px 0 / 1px 100% no-repeat;
}
.file::before {
    content: "";
    width: 11px;
    border-top: 1px dotted #888;
}
.pdf {
    width: 16px;
    height: 16px;
    margin-right: 3px;
}
.file a {
    padding: 0 1px;
    border: 1px solid transparent;
    line-height: 14px;
    color: #000;
    text-decoration: none;
}
.file a.selected {
    border: 1px dotted #c87820;
    background-color: #3399ff;
    color: #fff;
}
.tree .more {
    padding-left: 42px;
}
.splitter {
    display: flex;
    align-items: center;
    width: 9px;
    padding: 20px 0 0 1px;
    border-right: 1px solid #a0a8b0;
    background-color: #f6f6f6;
}

/* scrollbars */
.scrollbar {
    display: flex;
    flex-direction: column;
    background-color: #fff;
}
.scrollbar button {
    display: flex;
    align-items: center;
    justify-content: center;
    height: 16px;
    border: 1px solid #b4b4b4;
}
.scrollbar path {
    fill: none;
    stroke: #555;
}
.track {
    display: flex;
    flex: 1;
    flex-direction: column;
    border: solid #b4b4b4;
    border-width: 0 1px;
}
.thumb {
    display: flex;
    flex-direction: column;
    align-items: center;
    justify-content: center;
    gap: 1px;
    border: 1px solid #b4b4b4;
    border-width: 1px 0;
    background-color: #dadada;
}
.thumb i {
    width: 8px;
    height: 2px;
    background-color: #555;
}
.tree-scroll {
    width: 17px;
}
.tree-scroll .before {
    flex: 133;
}
.tree-scroll .thumb {
    flex: 102;
}
.tree-scroll .after {
    flex: 424;
}
.doc-scroll {
    width: 15px;
}
.doc-scroll button {
    border-width: 0 0 1px 1px;
}
.doc-scroll button:last-child {
    border-width: 1px 0 0 1px;
}
.doc-scroll .track {
    border-width: 0 0 0 1px;
}
.doc-scroll .before {
    flex: 36;
}
.doc-scroll .thumb {
    flex: 36;
}
.doc-scroll .after {
    flex: 570;
}

/* document side */
.document {
    display: flex;
    flex: 1;
    flex-direction: column;
    min-width: 0;
}
.doc-tabs {
    display: flex;
    align-items: flex-end;
    height: 23px;
}
.edge {
    fill: none;
    stroke: #8c98a4;
}
.doc-tab {
    height: 21px;
    padding: 0 6px 0 8px;
    border: solid #8c98a4;
    border-width: 1px 0;
}
.doc-tab.active {
    padding: 0 1px 0 0;
    border-bottom-color: transparent;
    color: #0000c8;
}
.doc-close {
    height: 21px;
    padding: 3px 0 4px 1px;
    border-top: 1px solid #8c98a4;
}
.doc-line {
    flex: 1;
    border-bottom: 1px solid #8c98a4;
}
.toolbar {
    display: flex;
    align-items: center;
    gap: 8px;
    height: 27px;
    padding: 1px 6px 0;
    font: 13px/20px "Noto Sans", sans-serif;
}
.sep {
    width: 1px;
    height: 22px;
    margin: 0 1px 0 -4px;
    background-color: #a0a0a0;
}
.toolbar input {
    height: 20px;
    padding: 0 8px 0 2px;
    border: 1px solid #fff;
    border-top-color: #888;
    border-left-color: #888;
    background-color: #fff;
    font: inherit;
}
.page-input {
    width: 40px;
    margin: 0 -4px 0 -2px;
}
.toolbar .page-input {
    padding-right: 3px;
    text-align: right;
}
.toolbar .next {
    margin-left: 2px;
}
.find-input {
    width: 160px;
    margin: 0 -2px 0 -5px;
}
.case {
    overflow: visible;
}
.viewer {
    display: flex;
    flex: 1;
    min-height: 0;
    border-top: 2px solid #8f8f8f;
    border-bottom: 2px solid #eef4f8;
}
.canvas {
    display: flex;
    flex: 1;
    align-items: flex-start;
    justify-content: center;
    overflow: hidden;
    background-color: #999;
}
.sheet {
    flex: 0 1 953px;
    min-width: 0;
    background-color: #fff;
    font-family: "DejaVu Sans", sans-serif;
    font-size: 4px;
    shape-rendering: crispEdges;
}
.sheet path, .sheet rect {
    fill: none;
}
.wire {
    stroke: #707070;
}
.plate {
    stroke: #111;
}
.curve {
    fill: none;
    stroke: #777;
    shape-rendering: auto;
}
.dot {
    fill: #111;
    stroke: none;
}
.sheet .solid {
    fill: #111;
}
.part {
    fill: none;
    stroke: #f6f67a;
    stroke-dasharray: 3 1;
}
.sheet .filled {
    fill: #fdfdb0;
}
.net-box {
    stroke: #7878c8;
    stroke-dasharray: 2 1;
}
.net {
    fill: #20209a;
    font-family: "Noto Sans", sans-serif;
}
.tiny {
    fill: #333;
    stroke: none;
}
.chip {
    stroke: #111;
    stroke-width: 2;
}
.pins {
    stroke-width: 1;
}
.dash {
    stroke: #777;
    stroke-dasharray: 3 2;
}
.note {
    fill: #222;
    font-size: 5px;
}
.italic {
    font-style: italic;
}
.heading {
    font: bold 11px "Open Sans", sans-serif;
}
.frame {
    stroke: #555;
}
.block {
    fill: #222;
    font-size: 9px;
}
.narrow {
    font-family: "Noto Sans", sans-serif;
}

/* status bar */
.status {
    display: flex;
    align-items: flex-end;
    justify-content: space-between;
    height: 20px;
    background-color: #44678c;
    line-height: 14px;
}
.current {
    padding-right: 1px;
    color: #fff;
}
```
